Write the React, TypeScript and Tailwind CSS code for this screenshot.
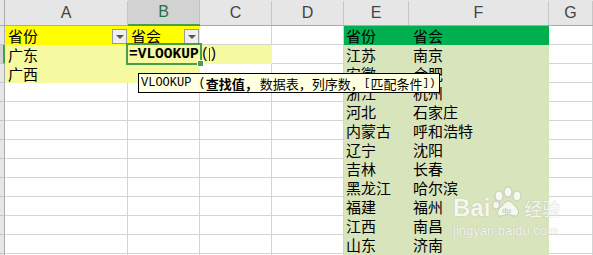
import React from "react";

const efData: [string, string][] = [
  ["省份", "省会"],
  ["江苏", "南京"],
  ["安徽", "合肥"],
  ["浙江", "杭州"],
  ["河北", "石家庄"],
  ["内蒙古", "呼和浩特"],
  ["辽宁", "沈阳"],
  ["吉林", "长春"],
  ["黑龙江", "哈尔滨"],
  ["福建", "福州"],
  ["江西", "南昌"],
  ["山东", "济南"],
  ["", ""],
];

const WHITE = "bg-white border-[#d4d4d4]";
const YEL = "bg-[#ffff00] border-[#ffff00]";
const LY = "bg-[#f5f99f] border-[#f5f99f]";
const GRN = "bg-[#00b050] border-[#00b050]";
const LG = "bg-[#d8e4bc] border-[#d8e4bc]";

function Cell({ cls, children, pl = "pl-[3px]" }: { cls: string; children?: React.ReactNode; pl?: string }) {
  return (
    <div className={`flex items-center ${pl} border-r border-b whitespace-nowrap text-[15px] leading-none text-black ${cls}`}>
      {children}
    </div>
  );
}

function Dropdown() {
  return (
    <div className="self-end w-[15px] h-[15px] border border-[#9a9a9a] bg-[#efefef] flex items-center justify-center">
      <div className="w-0 h-0 border-l-[4px] border-r-[4px] border-t-[4px] border-l-transparent border-r-transparent border-t-[#555555]" />
    </div>
  );
}

function ColHeader({ letter, active }: { letter: string; active?: boolean }) {
  if (active) {
    return (
      <div className="flex flex-col bg-[#e6e6e6] border-b-2 border-[#4a9e46]">
        <div className="h-[7px]" />
        <div className="flex-1 flex items-center justify-center bg-[#d2d2d2] border-r border-[#c0c0c0] text-[16px] text-[#217346] font-['Liberation_Sans',sans-serif]">
          {letter}
        </div>
      </div>
    );
  }
  return (
    <div className="flex flex-col bg-[#e6e6e6] border-b border-[#ababab]">
      <div className="h-[7px]" />
      <div className="flex-1 flex items-center justify-center border-r border-[#c6c6c6] text-[16px] text-[#444444] font-['Liberation_Sans',sans-serif]">
        {letter}
      </div>
    </div>
  );
}

function RowHeader({ active }: { active?: boolean }) {
  return active ? (
    <div className="bg-[#d2d2d2] border-r-2 border-r-[#4a9e46] border-b border-b-[#c6c6c6]" />
  ) : (
    <div className="bg-[#e6e6e6] border-r border-r-[#ababab] border-b border-b-[#c6c6c6]" />
  );
}

export default function App() {
  const rows = efData.map((ef, i) => {
    const r = i + 1;
    let a: React.ReactNode = null;
    let b: React.ReactNode = null;
    let aCls = WHITE;
    let bCls = WHITE;
    let cCls = WHITE;
    if (r === 1) {
      aCls = YEL;
      bCls = YEL;
      a = (
        <>
          <span className="flex-1">省份</span>
          <Dropdown />
        </>
      );
      b = (
        <>
          <span className="flex-1">省会</span>
          <Dropdown />
        </>
      );
    } else if (r === 2) {
      aCls = LY;
      bCls = LY;
      cCls = LY;
      a = "广东";
      b = (
        <span className="relative z-10 flex items-center">
          <span className="font-['Liberation_Mono',monospace] font-bold text-[14.5px]">=VLOOKUP</span>
          <span className="ml-[2px] font-['Liberation_Mono',monospace] text-[14px]">(</span>
          <span className="inline-block w-px h-[13px] bg-[#223f8f] ml-[0px] mr-[1px]" />
          <span className="font-['Liberation_Mono',monospace] text-[14px] -ml-[2px]">)</span>
        </span>
      );
    } else if (r === 3) {
      aCls = LY;
      bCls = LY;
      a = "广西";
    }
    const efCls = r === 1 ? GRN : LG;
    return (
      <React.Fragment key={r}>
        <RowHeader active={r === 2} />
        <Cell cls={aCls} pl={r === 1 ? "pl-[3px] pr-0" : "pl-[3px]"}>{a}</Cell>
        <Cell cls={bCls} pl={r === 2 ? "pl-[1px]" : "pl-[3px]"}>{b}</Cell>
        <Cell cls={cCls} />
        <Cell cls={WHITE} />
        <Cell cls={efCls} pl="pl-[2px]">{ef[0]}</Cell>
        <Cell cls={efCls} pl="pl-[4px]">{ef[1]}</Cell>
        <Cell cls={WHITE} />
      </React.Fragment>
    );
  });

  return (
    <div className="relative w-[593px] h-[255px] overflow-hidden bg-white font-['Noto_Sans_CJK_SC',sans-serif]">
      <div className="grid grid-cols-[5px_123px_72px_72px_72px_65px_140px_1fr] grid-rows-[26px_repeat(13,19px)]">
        <div className="bg-[#e6e6e6] border-r border-b border-[#ababab]" />
        <ColHeader letter="A" />
        <ColHeader letter="B" active />
        <ColHeader letter="C" />
        <ColHeader letter="D" />
        <ColHeader letter="E" />
        <ColHeader letter="F" />
        <ColHeader letter="G" />
        {rows}
      </div>

      {/* selection box */}
      <div className="absolute left-[126px] top-[43px] w-[76px] h-[22px] border-2 border-[#4a9e46] pointer-events-none" />
      <div className="absolute left-[197px] top-[60px] w-[7px] h-[7px] bg-[#4a9e46] border border-white" />

      {/* tooltip */}
      <div className="absolute left-[138px] top-[73px] h-[20px] border border-black bg-[#ffffe1] flex items-center pl-[2px] pr-[3px] whitespace-nowrap text-black text-[13px] leading-none z-20">
        <span className="font-['Liberation_Mono',monospace] text-[12px]">VLOOKUP (</span>
        <span className="font-bold mr-[2px]">查找值，</span>
        <span>数据表，列序数，</span>
        <span className="font-['Liberation_Mono',monospace] text-[11px]">[</span>
        <span>匹配条件</span>
        <span className="font-['Liberation_Mono',monospace] text-[11px]">])</span>
      </div>

      {/* watermark */}
      <div className="absolute left-[453px] top-[196px] flex flex-col items-start opacity-75 pointer-events-none z-20">
        <div className="flex items-center">
          <span className="text-[24px] leading-none font-bold text-white font-['Liberation_Sans',sans-serif] [text-shadow:0_0_1px_#9a9a9a]">Bai</span>
          <svg width="34" height="34" viewBox="0 0 34 34" className="-mt-[10px]">
            <g fill="#ffffff" stroke="#b0b0b0" strokeWidth="0.8">
              <ellipse cx="9" cy="10" rx="4" ry="5" />
              <ellipse cx="18" cy="6" rx="4" ry="5" />
              <ellipse cx="27" cy="10" rx="4" ry="5" />
              <ellipse cx="6" cy="19" rx="3.5" ry="4" />
              <path d="M10 30 C6 30 7 24 11 21 C14 18 16 15 18 15 C21 15 23 18 26 21 C30 25 29 30 25 30 C21 30 20 28 18 28 C15 28 14 30 10 30 Z" />
            </g>
            <text x="12" y="27" fontSize="8" fill="#a8a8a8" fontFamily="Liberation Sans">du</text>
          </svg>
          <span className="text-[18px] leading-none text-white [text-shadow:0_0_1px_#9a9a9a]">经验</span>
        </div>
        <span className="text-[13px] leading-none text-white font-['Liberation_Sans',sans-serif] [text-shadow:0_0_1px_#9a9a9a] mt-[4px]">jingyan.baidu.com</span>
      </div>
    </div>
  );
}
